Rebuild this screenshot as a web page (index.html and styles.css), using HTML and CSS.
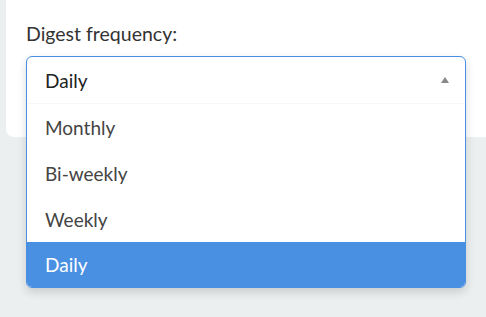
FILE: index.html
```html
<!DOCTYPE html>
<html lang="en">
<head>
    <meta charset="UTF-8">
    <meta name="viewport" content="width=device-width, initial-scale=1.0">
    <title>Digest settings</title>
    <link rel="stylesheet" href="styles.css">
</head>
<body>
    <div class="card">
        <div class="field">
            <label class="field-label">Digest frequency:</label>
            <div class="select">
                <div class="select-open">
                    <div class="select-head">
                        <span class="select-value">Daily</span>
                        <span class="select-caret"></span>
                    </div>
                    <ul class="options">
                        <li class="option">Monthly</li>
                        <li class="option">Bi-weekly</li>
                        <li class="option">Weekly</li>
                        <li class="option selected">Daily</li>
                    </ul>
                </div>
            </div>
        </div>
    </div>
</body>
</html>
```

FILE: styles.css
```css
* { margin: 0; padding: 0; box-sizing: border-box; }
body {
    font-family: Lato, 'Noto Sans', sans-serif;
    background: #eceff0;
    color: #333;
    height: 317px;
    overflow: hidden;
}
.card {
    background: #fff;
    margin: 0 -20px 0 6px;
    padding: 21px 40px 32px 20px;
    border-radius: 0 0 0 8px;
    height: 137px;
}
.field-label {
    display: block;
    font-size: 19.5px;
    line-height: 25px;
    color: #333;
    margin-bottom: 10px;
}
.select {
    position: relative;
    height: 48px;
    width: 440px;
}
.select-open {
    position: absolute;
    top: 0;
    left: 0;
    right: 0;
    background: #fff;
    border: 1px solid #4a90e2;
    border-radius: 6px;
    overflow: hidden;
    box-shadow: 0 4px 10px rgba(0,0,0,0.15);
    z-index: 10;
}
.select-head {
    display: flex;
    align-items: center;
    justify-content: space-between;
    height: 47px;
    padding: 0 16px 0 18px;
    border-bottom: 1px solid #f7f7f7;
}
.select-value {
    font-size: 19px;
    color: #222;
}
.select-caret {
    width: 0;
    height: 0;
    border-left: 4px solid transparent;
    border-right: 4px solid transparent;
    border-bottom: 6px solid #888;
}
.options { list-style: none; }
.option {
    height: 46px;
    display: flex;
    align-items: center;
    padding-left: 18px;
    font-size: 19px;
    color: #444;
}
.option.selected {
    background: #4a90e2;
    color: #fff;
    height: 45px;
}
```
